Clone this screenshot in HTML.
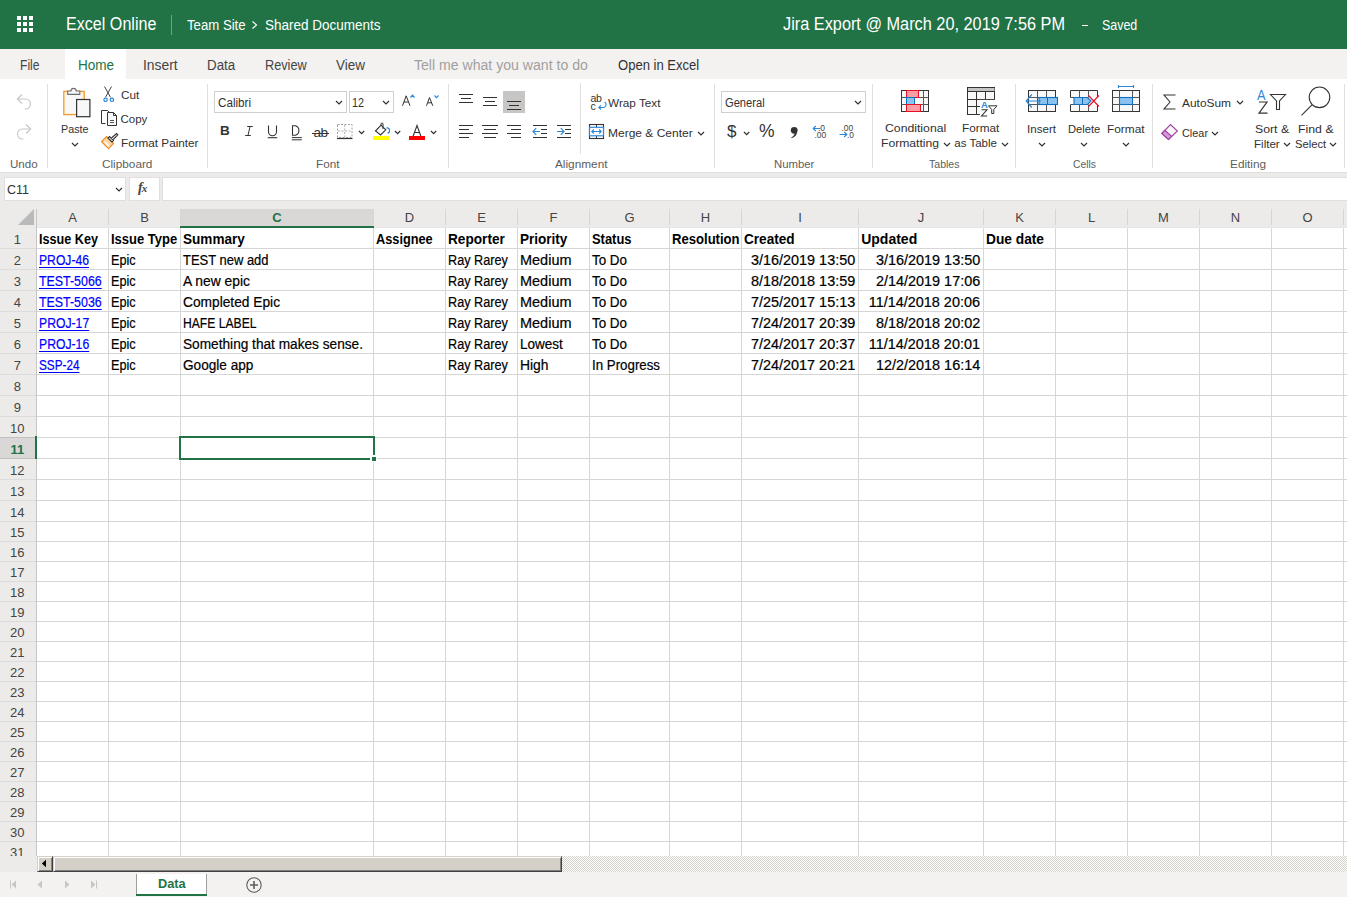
<!DOCTYPE html>
<html><head><meta charset="utf-8"><style>
html,body{margin:0;padding:0;}
body{width:1347px;height:897px;overflow:hidden;position:relative;background:#fff;font-family:"Liberation Sans",sans-serif;}
body>div,body>svg{position:absolute;}
.t{white-space:nowrap;line-height:1;}
</style></head><body>
<div style="left:0px;top:0px;width:1347px;height:49px;background:#217346;"></div>
<div style="left:17px;top:16px;width:4px;height:4px;background:#fff;"></div>
<div style="left:17px;top:22px;width:4px;height:4px;background:#fff;"></div>
<div style="left:17px;top:28px;width:4px;height:4px;background:#fff;"></div>
<div style="left:23px;top:16px;width:4px;height:4px;background:#fff;"></div>
<div style="left:23px;top:22px;width:4px;height:4px;background:#fff;"></div>
<div style="left:23px;top:28px;width:4px;height:4px;background:#fff;"></div>
<div style="left:29px;top:16px;width:4px;height:4px;background:#fff;"></div>
<div style="left:29px;top:22px;width:4px;height:4px;background:#fff;"></div>
<div style="left:29px;top:28px;width:4px;height:4px;background:#fff;"></div>
<div class="t" style="left:65.60px;top:16.00px;font-size:17.5px;color:#fff;transform:scaleX(0.9202);transform-origin:left center;">Excel Online</div>
<div style="left:171px;top:15px;width:1px;height:20px;background:rgba(255,255,255,0.35);"></div>
<div class="t" style="left:187.30px;top:18.00px;font-size:14px;color:#fff;transform:scaleX(0.9414);transform-origin:left center;">Team Site</div>
<svg style="left:251px;top:20px" width="8" height="10" viewBox="0 0 8 10"><path d="M1.5 1.5 L5.5 5 L1.5 8.5" fill="none" stroke="#fff" stroke-width="1.2"/></svg>
<div class="t" style="left:264.50px;top:18.00px;font-size:14px;color:#fff;transform:scaleX(0.9638);transform-origin:left center;">Shared Documents</div>
<div class="t" style="left:782.70px;top:16.00px;font-size:17.5px;color:#fff;transform:scaleX(0.9314);transform-origin:left center;">Jira Export @ March 20, 2019 7:56 PM</div>
<div style="left:1082px;top:25px;width:6px;height:1px;background:#fff;"></div>
<div class="t" style="left:1102.30px;top:18.00px;font-size:14px;color:#fff;transform:scaleX(0.8892);transform-origin:left center;">Saved</div>
<div style="left:0px;top:49px;width:1347px;height:30px;background:#f3f2f1;"></div>
<div style="left:65px;top:49px;width:61px;height:30px;background:#fff;"></div>
<div class="t" style="left:20.30px;top:58.00px;font-size:14px;color:#444;transform:scaleX(0.8644);transform-origin:left center;">File</div>
<div class="t" style="left:143.00px;top:58.00px;font-size:14px;color:#444;transform:scaleX(0.9910);transform-origin:left center;">Insert</div>
<div class="t" style="left:207.30px;top:58.00px;font-size:14px;color:#444;transform:scaleX(0.9536);transform-origin:left center;">Data</div>
<div class="t" style="left:265.20px;top:58.00px;font-size:14px;color:#444;transform:scaleX(0.9084);transform-origin:left center;">Review</div>
<div class="t" style="left:335.70px;top:58.00px;font-size:14px;color:#444;transform:scaleX(0.9637);transform-origin:left center;">View</div>
<div class="t" style="left:77.60px;top:58.00px;font-size:14px;color:#217346;transform:scaleX(0.9667);transform-origin:left center;">Home</div>
<div class="t" style="left:414.40px;top:58.00px;font-size:14px;color:#a19f9d;transform:scaleX(1.0060);transform-origin:left center;">Tell me what you want to do</div>
<div class="t" style="left:618.40px;top:58.00px;font-size:14px;color:#333;transform:scaleX(0.9316);transform-origin:left center;">Open in Excel</div>
<div style="left:0px;top:79px;width:1347px;height:93px;background:#fff;"></div>
<div style="left:47px;top:84px;width:1px;height:84px;background:#e1dfdd;"></div>
<div style="left:207px;top:84px;width:1px;height:84px;background:#e1dfdd;"></div>
<div style="left:448px;top:84px;width:1px;height:84px;background:#e1dfdd;"></div>
<div style="left:714px;top:84px;width:1px;height:84px;background:#e1dfdd;"></div>
<div style="left:872px;top:84px;width:1px;height:84px;background:#e1dfdd;"></div>
<div style="left:1015px;top:84px;width:1px;height:84px;background:#e1dfdd;"></div>
<div style="left:1152px;top:84px;width:1px;height:84px;background:#e1dfdd;"></div>
<div style="left:1344px;top:84px;width:1px;height:84px;background:#e1dfdd;"></div>
<div style="left:580px;top:83px;width:1px;height:71px;background:#e1dfdd;"></div>
<div class="t" style="left:9.70px;top:159.00px;font-size:11.5px;color:#605e5c;transform:scaleX(1.0076);transform-origin:left center;">Undo</div>
<div class="t" style="left:102.40px;top:159.00px;font-size:11.5px;color:#605e5c;transform:scaleX(1.0239);transform-origin:left center;">Clipboard</div>
<div class="t" style="left:316.40px;top:159.00px;font-size:11.5px;color:#605e5c;transform:scaleX(1.0212);transform-origin:left center;">Font</div>
<div class="t" style="left:555.20px;top:159.00px;font-size:11.5px;color:#605e5c;transform:scaleX(1.0266);transform-origin:left center;">Alignment</div>
<div class="t" style="left:773.70px;top:159.00px;font-size:11.5px;color:#605e5c;transform:scaleX(0.9877);transform-origin:left center;">Number</div>
<div class="t" style="left:928.50px;top:159.00px;font-size:11.5px;color:#605e5c;transform:scaleX(0.9175);transform-origin:left center;">Tables</div>
<div class="t" style="left:1072.60px;top:159.00px;font-size:11.5px;color:#605e5c;transform:scaleX(0.8959);transform-origin:left center;">Cells</div>
<div class="t" style="left:1230.40px;top:159.00px;font-size:11.5px;color:#605e5c;transform:scaleX(1.0267);transform-origin:left center;">Editing</div>
<div class="t" style="left:60.50px;top:124.00px;font-size:11.5px;color:#323130;transform:scaleX(0.9351);transform-origin:left center;">Paste</div>
<svg style="left:71px;top:141.5px" width="8" height="6" viewBox="-4 -2.5 8 6"><path d="M-3 -1.5 L0 1.5 L3 -1.5" fill="none" stroke="#323130" stroke-width="1.2"/></svg>
<div class="t" style="left:120.50px;top:90.00px;font-size:11.5px;color:#323130;transform:scaleX(1.0226);transform-origin:left center;">Cut</div>
<div class="t" style="left:120.50px;top:114.00px;font-size:11.5px;color:#323130;">Copy</div>
<div class="t" style="left:120.50px;top:138.00px;font-size:11.5px;color:#323130;transform:scaleX(1.0190);transform-origin:left center;">Format Painter</div>
<div style="left:214px;top:91px;width:133px;height:22px;background:#fff;border:1px solid #d2d0ce;box-sizing:border-box;"></div>
<div class="t" style="left:217.60px;top:97.00px;font-size:12px;color:#323130;transform:scaleX(0.9704);transform-origin:left center;">Calibri</div>
<svg style="left:335px;top:99.5px" width="8" height="6" viewBox="-4 -2.5 8 6"><path d="M-3 -1.5 L0 1.5 L3 -1.5" fill="none" stroke="#323130" stroke-width="1.2"/></svg>
<div style="left:349px;top:91px;width:45px;height:22px;background:#fff;border:1px solid #d2d0ce;box-sizing:border-box;"></div>
<div class="t" style="left:351.60px;top:97.00px;font-size:12px;color:#323130;transform:scaleX(0.8990);transform-origin:left center;">12</div>
<svg style="left:382px;top:99.5px" width="8" height="6" viewBox="-4 -2.5 8 6"><path d="M-3 -1.5 L0 1.5 L3 -1.5" fill="none" stroke="#323130" stroke-width="1.2"/></svg>
<div class="t" style="left:608.30px;top:98.00px;font-size:11.5px;color:#323130;transform:scaleX(1.0225);transform-origin:left center;">Wrap Text</div>
<div class="t" style="left:608.30px;top:128.00px;font-size:11.5px;color:#323130;transform:scaleX(1.0434);transform-origin:left center;">Merge &amp; Center</div>
<svg style="left:697px;top:130.5px" width="8" height="6" viewBox="-4 -2.5 8 6"><path d="M-3 -1.5 L0 1.5 L3 -1.5" fill="none" stroke="#323130" stroke-width="1.2"/></svg>
<div style="left:721px;top:91px;width:145px;height:22px;background:#fff;border:1px solid #d2d0ce;box-sizing:border-box;"></div>
<div class="t" style="left:724.50px;top:97.00px;font-size:12px;color:#323130;transform:scaleX(0.9276);transform-origin:left center;">General</div>
<svg style="left:854px;top:99.5px" width="8" height="6" viewBox="-4 -2.5 8 6"><path d="M-3 -1.5 L0 1.5 L3 -1.5" fill="none" stroke="#323130" stroke-width="1.2"/></svg>
<div class="t" style="left:884.50px;top:123.00px;font-size:11.5px;color:#323130;transform:scaleX(1.0636);transform-origin:left center;">Conditional</div>
<div class="t" style="left:880.60px;top:138.00px;font-size:11.5px;color:#323130;transform:scaleX(1.0553);transform-origin:left center;">Formatting</div>
<svg style="left:943px;top:142.0px" width="8" height="6" viewBox="-4 -2.5 8 6"><path d="M-3 -1.5 L0 1.5 L3 -1.5" fill="none" stroke="#323130" stroke-width="1.2"/></svg>
<div class="t" style="left:962.40px;top:123.00px;font-size:11.5px;color:#323130;transform:scaleX(1.0241);transform-origin:left center;">Format</div>
<div class="t" style="left:954.30px;top:138.00px;font-size:11.5px;color:#323130;">as Table</div>
<svg style="left:1001px;top:142.0px" width="8" height="6" viewBox="-4 -2.5 8 6"><path d="M-3 -1.5 L0 1.5 L3 -1.5" fill="none" stroke="#323130" stroke-width="1.2"/></svg>
<div class="t" style="left:1026.70px;top:124.00px;font-size:11.5px;color:#323130;transform:scaleX(1.0083);transform-origin:left center;">Insert</div>
<div class="t" style="left:1067.70px;top:124.00px;font-size:11.5px;color:#323130;transform:scaleX(0.9717);transform-origin:left center;">Delete</div>
<div class="t" style="left:1107.40px;top:124.00px;font-size:11.5px;color:#323130;transform:scaleX(1.0324);transform-origin:left center;">Format</div>
<svg style="left:1038px;top:142.0px" width="8" height="6" viewBox="-4 -2.5 8 6"><path d="M-3 -1.5 L0 1.5 L3 -1.5" fill="none" stroke="#323130" stroke-width="1.2"/></svg>
<svg style="left:1080px;top:142.0px" width="8" height="6" viewBox="-4 -2.5 8 6"><path d="M-3 -1.5 L0 1.5 L3 -1.5" fill="none" stroke="#323130" stroke-width="1.2"/></svg>
<svg style="left:1122px;top:142.0px" width="8" height="6" viewBox="-4 -2.5 8 6"><path d="M-3 -1.5 L0 1.5 L3 -1.5" fill="none" stroke="#323130" stroke-width="1.2"/></svg>
<div class="t" style="left:1181.90px;top:98.00px;font-size:11.5px;color:#323130;transform:scaleX(1.0359);transform-origin:left center;">AutoSum</div>
<svg style="left:1235.5px;top:99.5px" width="8" height="6" viewBox="-4 -2.5 8 6"><path d="M-3 -1.5 L0 1.5 L3 -1.5" fill="none" stroke="#323130" stroke-width="1.2"/></svg>
<div class="t" style="left:1181.90px;top:128.00px;font-size:11.5px;color:#323130;transform:scaleX(0.9461);transform-origin:left center;">Clear</div>
<svg style="left:1210.6px;top:130.5px" width="8" height="6" viewBox="-4 -2.5 8 6"><path d="M-3 -1.5 L0 1.5 L3 -1.5" fill="none" stroke="#323130" stroke-width="1.2"/></svg>
<div class="t" style="left:1255.10px;top:124.00px;font-size:11.5px;color:#323130;transform:scaleX(1.0671);transform-origin:left center;">Sort &amp;</div>
<div class="t" style="left:1254.20px;top:139.00px;font-size:11.5px;color:#323130;transform:scaleX(1.0057);transform-origin:left center;">Filter</div>
<svg style="left:1283.3px;top:142.0px" width="8" height="6" viewBox="-4 -2.5 8 6"><path d="M-3 -1.5 L0 1.5 L3 -1.5" fill="none" stroke="#323130" stroke-width="1.2"/></svg>
<div class="t" style="left:1298.20px;top:124.00px;font-size:11.5px;color:#323130;transform:scaleX(1.0711);transform-origin:left center;">Find &amp;</div>
<div class="t" style="left:1294.70px;top:139.00px;font-size:11.5px;color:#323130;transform:scaleX(0.9762);transform-origin:left center;">Select</div>
<svg style="left:1329.3px;top:142.0px" width="8" height="6" viewBox="-4 -2.5 8 6"><path d="M-3 -1.5 L0 1.5 L3 -1.5" fill="none" stroke="#323130" stroke-width="1.2"/></svg>
<svg style="left:14px;top:92px" width="20" height="20" viewBox="0 0 20 20"><path d="M3.5 7 H11.5 A5 5 0 0 1 11.5 17 H10.5" fill="none" stroke="#c8c6c4" stroke-width="1.1"/><path d="M8 2.5 L3.3 7 L8 11.5" fill="none" stroke="#c8c6c4" stroke-width="1.1"/></svg>
<svg style="left:14px;top:122px" width="20" height="20" viewBox="0 0 20 20"><path d="M16.5 7 H8.5 A5 5 0 0 0 8.5 17 H9.5" fill="none" stroke="#c8c6c4" stroke-width="1.1"/><path d="M12 2.5 L16.7 7 L12 11.5" fill="none" stroke="#c8c6c4" stroke-width="1.1"/></svg>
<svg style="left:62px;top:85px" width="30" height="33" viewBox="0 0 30 33"><rect x="1.8" y="6.3" width="20.4" height="23.4" fill="#fdf2d0" stroke="#ed8b22" stroke-width="1.1"/><rect x="3.5" y="9" width="16.5" height="19" fill="#f8f8f8"/><path d="M5.7 9.4 V6 H9 A2.6 2.6 0 0 1 14.2 6 H17.8 V9.4 Z" fill="#f8f8f8" stroke="#6e6e6e" stroke-width="1.1"/><rect x="14.6" y="14.5" width="13.3" height="17.2" fill="#f8f8f8" stroke="#333" stroke-width="1.2"/></svg>
<svg style="left:102px;top:85px" width="14" height="18" viewBox="0 0 14 18"><path d="M2.5 1.5 L8.5 12.3 M9.5 1.5 L3.5 12.3" stroke="#444" stroke-width="1" fill="none"/><circle cx="3.6" cy="14.8" r="1.7" fill="none" stroke="#2b88d8" stroke-width="1.2"/><circle cx="9.9" cy="14.8" r="1.7" fill="none" stroke="#2b88d8" stroke-width="1.2"/></svg>
<svg style="left:100px;top:109px" width="19" height="18" viewBox="0 0 19 18"><path d="M7.5 1.5 H1.5 V14.5 H5.5" fill="none" stroke="#333" stroke-width="1"/><path d="M7.5 1.5 L9 3" fill="none" stroke="#333" stroke-width="1"/><path d="M7.5 3.5 H13.5 L16.5 6.5 V16.5 H7.5 Z" fill="#f8f8f8" stroke="#333" stroke-width="1"/><path d="M13.5 3.5 V6.5 H16.5" fill="none" stroke="#333" stroke-width="1"/><path d="M10 11.5 H14 M10 13.5 H14" stroke="#555" stroke-width="1"/></svg>
<svg style="left:100px;top:132px" width="19" height="18" viewBox="0 0 19 18"><path d="M1.5 9.5 L8.5 16.8 L13.5 11.5 L6.5 4.5 Z" fill="#fcd59f" stroke="#ed8b22" stroke-width="1.1"/><path d="M4.5 9.5 L9 14" stroke="#fff" stroke-width="1.5"/><path d="M8 6 L12 10 L13.5 8.5 L9.5 4.5 Z" fill="#fff" stroke="#333" stroke-width="1.1"/><path d="M11.5 6 L16.5 1.5 L17.8 2.8 L13.3 7.5" fill="#fff" stroke="#333" stroke-width="1.1"/></svg>
<svg style="left:401px;top:93px" width="16" height="15" viewBox="0 0 16 15"><path d="M1.5 12.8 L5.2 2.8 L9 12.8 M3 9 H7.5" fill="none" stroke="#323130" stroke-width="1"/><path d="M9.5 4.5 L11.5 2.2 L13.5 4.5" fill="none" stroke="#2b88d8" stroke-width="1.2"/></svg>
<svg style="left:425px;top:93px" width="16" height="15" viewBox="0 0 16 15"><path d="M1.5 12.8 L4.5 4.5 L7.8 12.8 M2.8 9.8 H6.5" fill="none" stroke="#323130" stroke-width="1"/><path d="M9.5 2.5 L11.5 4.6 L13.5 2.5" fill="none" stroke="#2b88d8" stroke-width="1.2"/></svg>
<div class="t" style="left:220px;top:124px;font-size:13.5px;font-weight:bold;color:#333;line-height:14px;">B</div>
<svg style="left:244px;top:125px" width="10" height="12" viewBox="0 0 10 12"><path d="M3.2 1.5 H8.8 M1.2 10.5 H6.8 M6 1.5 L4 10.5" fill="none" stroke="#333" stroke-width="1"/></svg>
<svg style="left:266px;top:124px" width="13" height="17" viewBox="0 0 13 17"><path d="M2.5 1.5 V7.8 A4 4 0 0 0 10.5 7.8 V1.5" fill="none" stroke="#333" stroke-width="1.1"/><path d="M1.8 13.7 H11.2" stroke="#333" stroke-width="1.1"/></svg>
<svg style="left:290px;top:124px" width="14" height="17" viewBox="0 0 14 17"><path d="M2.5 1.8 H5.5 A5 5 0 0 1 5.5 11.3 H2.5 Z" fill="none" stroke="#333" stroke-width="1.1"/><path d="M1.8 13.6 H11.8 M1.8 15.8 H11.8" stroke="#333" stroke-width="1"/></svg>
<div class="t" style="left:313.5px;top:125.5px;font-size:13.5px;color:#333;line-height:14px;letter-spacing:-0.5px;">ab</div>
<div style="left:312px;top:133px;width:17px;height:1px;background:#333;"></div>
<svg style="left:336px;top:123px" width="18" height="17" viewBox="0 0 18 17"><rect x="1.5" y="1.5" width="14.5" height="13" fill="none" stroke="#a0a0a0" stroke-width="1" stroke-dasharray="2 1.5"/><path d="M8.7 2 V14 M2 8 H15.5" stroke="#b0b0b0" stroke-width="1" stroke-dasharray="2 1.5"/><path d="M1 15.5 H16.5" stroke="#333" stroke-width="1.2"/></svg>
<svg style="left:357.9px;top:130.2px" width="7.2" height="5.6" viewBox="-3.6 -2.3 7.2 5.6"><path d="M-2.6 -1.3 L0 1.3 L2.6 -1.3" fill="none" stroke="#323130" stroke-width="1.2"/></svg>
<svg style="left:372px;top:122px" width="18" height="14" viewBox="0 0 18 14"><path d="M3.5 9 L9 3.2 L13.8 7.8 L8.6 13 Z" fill="#f8f8f8" stroke="#333" stroke-width="1.1"/><path d="M9 3.2 V2 A1 1 0 0 1 11 2 V7" fill="none" stroke="#333" stroke-width="1"/><path d="M14.5 6 A1.8 1.8 0 0 1 15.6 11" fill="none" stroke="#2b88d8" stroke-width="1.3"/></svg>
<div style="left:373px;top:136px;width:16px;height:4px;background:#ffff00;"></div>
<svg style="left:393.9px;top:130.2px" width="7.2" height="5.6" viewBox="-3.6 -2.3 7.2 5.6"><path d="M-2.6 -1.3 L0 1.3 L2.6 -1.3" fill="none" stroke="#323130" stroke-width="1.2"/></svg>
<svg style="left:409px;top:124px" width="16" height="13" viewBox="0 0 16 13"><path d="M4 12.5 L8 1.5 L12 12.5 M5.5 8.5 H10.5" fill="none" stroke="#333" stroke-width="1.1"/></svg>
<div style="left:409px;top:136px;width:16px;height:4px;background:#ff0000;"></div>
<svg style="left:429.9px;top:130.2px" width="7.2" height="5.6" viewBox="-3.6 -2.3 7.2 5.6"><path d="M-2.6 -1.3 L0 1.3 L2.6 -1.3" fill="none" stroke="#323130" stroke-width="1.2"/></svg>
<div style="left:503px;top:91px;width:22px;height:22px;background:#c8c6c4;"></div>
<div style="left:459px;top:94px;width:14px;height:1px;background:#333;"></div>
<div style="left:461px;top:98px;width:10px;height:1px;background:#333;"></div>
<div style="left:459px;top:102px;width:14px;height:1px;background:#333;"></div>
<div style="left:483px;top:97px;width:14px;height:1px;background:#333;"></div>
<div style="left:485px;top:101px;width:10px;height:1px;background:#333;"></div>
<div style="left:483px;top:105px;width:14px;height:1px;background:#333;"></div>
<div style="left:507px;top:101px;width:14px;height:1px;background:#333;"></div>
<div style="left:509px;top:105px;width:10px;height:1px;background:#333;"></div>
<div style="left:507px;top:109px;width:14px;height:1px;background:#333;"></div>
<div style="left:459px;top:125px;width:14px;height:1px;background:#333;"></div>
<div style="left:459px;top:129px;width:10px;height:1px;background:#333;"></div>
<div style="left:459px;top:133px;width:14px;height:1px;background:#333;"></div>
<div style="left:459px;top:137px;width:10px;height:1px;background:#333;"></div>
<div style="left:482px;top:125px;width:16px;height:1px;background:#333;"></div>
<div style="left:484px;top:129px;width:12px;height:1px;background:#333;"></div>
<div style="left:482px;top:133px;width:16px;height:1px;background:#333;"></div>
<div style="left:484px;top:137px;width:12px;height:1px;background:#333;"></div>
<div style="left:507px;top:125px;width:14px;height:1px;background:#333;"></div>
<div style="left:511px;top:129px;width:10px;height:1px;background:#333;"></div>
<div style="left:507px;top:133px;width:14px;height:1px;background:#333;"></div>
<div style="left:511px;top:137px;width:10px;height:1px;background:#333;"></div>
<div style="left:533px;top:125px;width:14px;height:1px;background:#333;"></div>
<div style="left:541px;top:129px;width:6px;height:1px;background:#333;"></div>
<div style="left:541px;top:133px;width:6px;height:1px;background:#333;"></div>
<div style="left:533px;top:137px;width:14px;height:1px;background:#333;"></div>
<div style="left:557px;top:125px;width:14px;height:1px;background:#333;"></div>
<div style="left:565px;top:129px;width:6px;height:1px;background:#333;"></div>
<div style="left:565px;top:133px;width:6px;height:1px;background:#333;"></div>
<div style="left:557px;top:137px;width:14px;height:1px;background:#333;"></div>
<svg style="left:532px;top:127px" width="9" height="9" viewBox="0 0 9 9"><path d="M8 4.5 H1 M4.2 1.2 L1 4.5 L4.2 7.8" fill="none" stroke="#2b88d8" stroke-width="1.2"/></svg>
<svg style="left:556px;top:127px" width="9" height="9" viewBox="0 0 9 9"><path d="M1 4.5 H8 M4.8 1.2 L8 4.5 L4.8 7.8" fill="none" stroke="#2b88d8" stroke-width="1.2"/></svg>
<div class="t" style="left:590.5px;top:93px;font-size:10.5px;color:#333;line-height:10px;letter-spacing:-0.3px;">ab</div>
<div class="t" style="left:590.5px;top:101px;font-size:10.5px;color:#333;line-height:10px;">c</div>
<svg style="left:597px;top:100px" width="10" height="11" viewBox="0 0 10 11"><path d="M7.6 2 A3 3 0 0 1 5.5 7.5 H2 M4 5.3 L1.8 7.5 L4 9.7" fill="none" stroke="#2b88d8" stroke-width="1.1"/></svg>
<svg style="left:588px;top:123px" width="17" height="17" viewBox="0 0 17 17"><rect x="1.5" y="1.5" width="14" height="14" fill="#fff" stroke="#333" stroke-width="1.1"/><path d="M8.5 1.5 V4 M8.5 13 V15.5" stroke="#333" stroke-width="1"/><rect x="1.5" y="4.3" width="14" height="8.5" fill="#fff" stroke="#2b88d8" stroke-width="1.2"/><path d="M3.8 8.5 H13.2 M5.8 6.5 L3.8 8.5 L5.8 10.5 M11.2 6.5 L13.2 8.5 L11.2 10.5" fill="none" stroke="#2b88d8" stroke-width="1.1"/></svg>
<div class="t" style="left:727px;top:123px;font-size:17px;color:#333;line-height:17px;">$</div>
<svg style="left:742.9px;top:130.7px" width="7.2" height="5.6" viewBox="-3.6 -2.3 7.2 5.6"><path d="M-2.6 -1.3 L0 1.3 L2.6 -1.3" fill="none" stroke="#323130" stroke-width="1.2"/></svg>
<div class="t" style="left:759px;top:123px;font-size:17.5px;color:#333;line-height:17px;">%</div>
<svg style="left:789px;top:126px" width="10" height="13" viewBox="0 0 10 13"><circle cx="5.2" cy="4.3" r="3.4" fill="#333"/><path d="M7.9 5.5 C8.3 8.5 6.5 11 2.6 12.3 L2.2 11.4 C4.6 10.2 5.9 8.5 5.6 6.5 Z" fill="#333"/></svg>
<div class="t" style="left:818px;top:124px;font-size:8.5px;color:#444;line-height:8px;">.0</div>
<div class="t" style="left:814.5px;top:131px;font-size:8.5px;color:#444;line-height:8px;">.00</div>
<svg style="left:812px;top:125px" width="9" height="7" viewBox="0 0 9 7"><path d="M8.5 3.5 H1.2 M3.8 1 L1.2 3.5 L3.8 6" fill="none" stroke="#2b88d8" stroke-width="1.1"/></svg>
<div class="t" style="left:841.5px;top:124px;font-size:8.5px;color:#444;line-height:8px;">.00</div>
<div class="t" style="left:847px;top:131px;font-size:8.5px;color:#444;line-height:8px;">.0</div>
<svg style="left:839px;top:131px" width="9" height="7" viewBox="0 0 9 7"><path d="M0.5 3.5 H7.8 M5.2 1 L7.8 3.5 L5.2 6" fill="none" stroke="#2b88d8" stroke-width="1.1"/></svg>
<svg style="left:900px;top:89px" width="31" height="24" viewBox="0 0 31 24"><rect x="1.5" y="1.5" width="27" height="21" fill="#f8f8f8" stroke="#333" stroke-width="1"/><path d="M1.5 8.5 H28.5 M1.5 15.5 H28.5 M6.5 1.5 V22.5 M23.5 1.5 V22.5" stroke="#555" stroke-width="1"/><rect x="6.5" y="1.5" width="12" height="7" fill="#ff9ca5" stroke="#e81123" stroke-width="1"/><rect x="6.5" y="8.5" width="8" height="7" fill="#8cc2f0" stroke="#106ebe" stroke-width="1"/><rect x="6.5" y="15.5" width="14" height="7" fill="#ff9ca5" stroke="#e81123" stroke-width="1"/></svg>
<svg style="left:966px;top:86px" width="33" height="33" viewBox="0 0 33 33"><rect x="1.5" y="1.5" width="27" height="27" fill="#f8f8f8" stroke="#333" stroke-width="1"/><rect x="2" y="2" width="26.5" height="3.5" fill="#c8c6c4"/><path d="M1.5 5.5 H28.5 M1.5 13.5 H28.5 M1.5 20.5 H14 M10.5 5.5 V28.5 M19.5 5.5 V13.5" stroke="#333" stroke-width="1"/><rect x="14" y="13.9" width="19" height="19" fill="#fff"/><text x="15" y="21.5" font-family="Liberation Sans" font-weight="bold" font-size="9.5" fill="#2b88d8">A</text><path d="M15.5 23.8 H21 L15.5 30 H21.2" fill="none" stroke="#333" stroke-width="1.1"/><path d="M22.5 19.8 H31 L27.8 23.5 V27.5 H25.7 V23.5 Z" fill="#fff" stroke="#333" stroke-width="1"/></svg>
<svg style="left:1025px;top:89px" width="35" height="24" viewBox="0 0 35 24"><rect x="3.5" y="1.5" width="27" height="21" fill="#f8f8f8" stroke="#333" stroke-width="1"/><path d="M12.5 1.5 V22.5 M21.5 1.5 V22.5 M3.5 8.5 H30.5 M3.5 15.5 H30.5" stroke="#555" stroke-width="1"/><rect x="14" y="8.5" width="18.5" height="7" fill="#8cc2f0" stroke="#106ebe" stroke-width="1.1"/><path d="M22.5 8.8 V15.2" stroke="#106ebe" stroke-width="1"/><path d="M16 12 H2 M6.8 5.5 L1.2 12 L6.8 18.5" fill="none" stroke="#2b88d8" stroke-width="1.2"/></svg>
<svg style="left:1069px;top:89px" width="32" height="24" viewBox="0 0 32 24"><path d="M1.5 8.5 V1.5 H28.5 V8" fill="#f8f8f8" stroke="#333" stroke-width="1"/><path d="M1.5 15.5 V22.5 H28.5 V16" fill="#f8f8f8" stroke="#333" stroke-width="1"/><path d="M10.5 1.5 V8.5 M19.5 1.5 V8.5 M10.5 15.5 V22.5 M19.5 15.5 V22.5 M1.5 8.5 H5 M1.5 15.5 H5" stroke="#555" stroke-width="1"/><path d="M5 8.5 H18.5 L22 12 L18.5 15.5 H5 Z" fill="#8cc2f0" stroke="#106ebe" stroke-width="1.1"/><path d="M13.5 8.8 V15.2" stroke="#106ebe" stroke-width="1"/><path d="M19.5 6.5 L30 17.5 M30 6.5 L19.5 17.5" stroke="#e81123" stroke-width="1.1"/></svg>
<svg style="left:1111px;top:84px" width="31" height="29" viewBox="0 0 31 29"><rect x="1.5" y="6.5" width="27" height="21" fill="#f8f8f8" stroke="#333" stroke-width="1"/><path d="M8.5 6.5 V27.5 M21.5 6.5 V27.5 M1.5 13.5 H28.5 M1.5 20.5 H28.5" stroke="#555" stroke-width="1"/><rect x="8.5" y="13.5" width="13" height="7" fill="#8cc2f0" stroke="#106ebe" stroke-width="1.1"/><path d="M7.5 2.5 H22.5 M7.5 1 V4 M22.5 1 V4" stroke="#2b88d8" stroke-width="1.1"/></svg>
<svg style="left:1162px;top:93px" width="16" height="18" viewBox="0 0 16 18"><path d="M13.5 2 H2 L8 9 L2 16 H13.5" fill="none" stroke="#333" stroke-width="1.1"/></svg>
<svg style="left:1160px;top:123px" width="19" height="18" viewBox="0 0 19 18"><path d="M1.8 10.5 L10.5 1.5 L17.4 8 L8.5 16.4 Z" fill="#f8f8f8" stroke="#a33ea5" stroke-width="1.1"/><path d="M1.8 10.5 L4.85 7.35 L11.6 13.3 L8.5 16.4 Z" fill="#d29ad4" stroke="#a33ea5" stroke-width="1.1"/></svg>
<svg style="left:1256px;top:86px" width="32" height="30" viewBox="0 0 32 30"><text x="1.2" y="13.5" font-family="Liberation Sans" font-size="15" fill="#2b88d8" transform="scale(0.85,1)">A</text><path d="M3 16 H11 L3 27.2 H11.5" fill="none" stroke="#333" stroke-width="1.2"/><path d="M14.5 8.5 H29.5 L23.5 15 V23.5 H20.5 V15 Z" fill="#fff" stroke="#333" stroke-width="1.1"/></svg>
<svg style="left:1299px;top:85px" width="34" height="33" viewBox="0 0 34 33"><circle cx="20.5" cy="12.3" r="10.3" fill="#fff" stroke="#333" stroke-width="1.1"/><path d="M13.2 19.6 L2.5 30.3" stroke="#333" stroke-width="1.1"/></svg>
<div style="left:0px;top:172px;width:1347px;height:37px;background:#edebe9;"></div>
<div style="left:0px;top:172px;width:1347px;height:1px;background:#e1dfdd;"></div>
<div style="left:4px;top:177px;width:122px;height:24px;background:#fff;border:1px solid #e1dfdd;box-sizing:border-box;"></div>
<div class="t" style="left:7.30px;top:183.00px;font-size:13px;color:#323130;transform:scaleX(0.9614);transform-origin:left center;">C11</div>
<svg style="left:115px;top:186.5px" width="8" height="6" viewBox="-4 -2.5 8 6"><path d="M-3 -1.5 L0 1.5 L3 -1.5" fill="none" stroke="#323130" stroke-width="1.2"/></svg>
<div style="left:129px;top:177px;width:31px;height:24px;background:#fff;border:1px solid #e1dfdd;box-sizing:border-box;"></div>
<div class="t" style="left:138px;top:181px;font-size:14px;font-style:italic;font-weight:bold;color:#444;line-height:14px;font-family:'Liberation Serif',serif;letter-spacing:-1px;">f<span style="font-size:11px">x</span></div>
<div style="left:162px;top:177px;width:1186px;height:24px;background:#fff;border:1px solid #e1dfdd;box-sizing:border-box;"></div>
<div style="left:0px;top:209px;width:1347px;height:18px;background:#edebe9;"></div>
<div style="left:0px;top:227px;width:36px;height:629px;background:#edebe9;"></div>
<div style="left:37px;top:228px;width:1310px;height:628px;background:#fff;"></div>
<div style="left:37px;top:248px;width:1310px;height:1px;background:#d6d6d6;"></div>
<div style="left:0px;top:248px;width:36px;height:1px;background:#dcdcdc;"></div>
<div style="left:37px;top:269px;width:1310px;height:1px;background:#d6d6d6;"></div>
<div style="left:0px;top:269px;width:36px;height:1px;background:#dcdcdc;"></div>
<div style="left:37px;top:290px;width:1310px;height:1px;background:#d6d6d6;"></div>
<div style="left:0px;top:290px;width:36px;height:1px;background:#dcdcdc;"></div>
<div style="left:37px;top:311px;width:1310px;height:1px;background:#d6d6d6;"></div>
<div style="left:0px;top:311px;width:36px;height:1px;background:#dcdcdc;"></div>
<div style="left:37px;top:332px;width:1310px;height:1px;background:#d6d6d6;"></div>
<div style="left:0px;top:332px;width:36px;height:1px;background:#dcdcdc;"></div>
<div style="left:37px;top:353px;width:1310px;height:1px;background:#d6d6d6;"></div>
<div style="left:0px;top:353px;width:36px;height:1px;background:#dcdcdc;"></div>
<div style="left:37px;top:374px;width:1310px;height:1px;background:#d6d6d6;"></div>
<div style="left:0px;top:374px;width:36px;height:1px;background:#dcdcdc;"></div>
<div style="left:37px;top:395px;width:1310px;height:1px;background:#d6d6d6;"></div>
<div style="left:0px;top:395px;width:36px;height:1px;background:#dcdcdc;"></div>
<div style="left:37px;top:416px;width:1310px;height:1px;background:#d6d6d6;"></div>
<div style="left:0px;top:416px;width:36px;height:1px;background:#dcdcdc;"></div>
<div style="left:37px;top:437px;width:1310px;height:1px;background:#d6d6d6;"></div>
<div style="left:0px;top:437px;width:36px;height:1px;background:#dcdcdc;"></div>
<div style="left:37px;top:458px;width:1310px;height:1px;background:#d6d6d6;"></div>
<div style="left:0px;top:458px;width:36px;height:1px;background:#dcdcdc;"></div>
<div style="left:37px;top:479px;width:1310px;height:1px;background:#d6d6d6;"></div>
<div style="left:0px;top:479px;width:36px;height:1px;background:#dcdcdc;"></div>
<div style="left:37px;top:500px;width:1310px;height:1px;background:#d6d6d6;"></div>
<div style="left:0px;top:500px;width:36px;height:1px;background:#dcdcdc;"></div>
<div style="left:37px;top:521px;width:1310px;height:1px;background:#d6d6d6;"></div>
<div style="left:0px;top:521px;width:36px;height:1px;background:#dcdcdc;"></div>
<div style="left:37px;top:541px;width:1310px;height:1px;background:#d6d6d6;"></div>
<div style="left:0px;top:541px;width:36px;height:1px;background:#dcdcdc;"></div>
<div style="left:37px;top:561px;width:1310px;height:1px;background:#d6d6d6;"></div>
<div style="left:0px;top:561px;width:36px;height:1px;background:#dcdcdc;"></div>
<div style="left:37px;top:581px;width:1310px;height:1px;background:#d6d6d6;"></div>
<div style="left:0px;top:581px;width:36px;height:1px;background:#dcdcdc;"></div>
<div style="left:37px;top:601px;width:1310px;height:1px;background:#d6d6d6;"></div>
<div style="left:0px;top:601px;width:36px;height:1px;background:#dcdcdc;"></div>
<div style="left:37px;top:621px;width:1310px;height:1px;background:#d6d6d6;"></div>
<div style="left:0px;top:621px;width:36px;height:1px;background:#dcdcdc;"></div>
<div style="left:37px;top:641px;width:1310px;height:1px;background:#d6d6d6;"></div>
<div style="left:0px;top:641px;width:36px;height:1px;background:#dcdcdc;"></div>
<div style="left:37px;top:661px;width:1310px;height:1px;background:#d6d6d6;"></div>
<div style="left:0px;top:661px;width:36px;height:1px;background:#dcdcdc;"></div>
<div style="left:37px;top:681px;width:1310px;height:1px;background:#d6d6d6;"></div>
<div style="left:0px;top:681px;width:36px;height:1px;background:#dcdcdc;"></div>
<div style="left:37px;top:701px;width:1310px;height:1px;background:#d6d6d6;"></div>
<div style="left:0px;top:701px;width:36px;height:1px;background:#dcdcdc;"></div>
<div style="left:37px;top:721px;width:1310px;height:1px;background:#d6d6d6;"></div>
<div style="left:0px;top:721px;width:36px;height:1px;background:#dcdcdc;"></div>
<div style="left:37px;top:741px;width:1310px;height:1px;background:#d6d6d6;"></div>
<div style="left:0px;top:741px;width:36px;height:1px;background:#dcdcdc;"></div>
<div style="left:37px;top:761px;width:1310px;height:1px;background:#d6d6d6;"></div>
<div style="left:0px;top:761px;width:36px;height:1px;background:#dcdcdc;"></div>
<div style="left:37px;top:781px;width:1310px;height:1px;background:#d6d6d6;"></div>
<div style="left:0px;top:781px;width:36px;height:1px;background:#dcdcdc;"></div>
<div style="left:37px;top:801px;width:1310px;height:1px;background:#d6d6d6;"></div>
<div style="left:0px;top:801px;width:36px;height:1px;background:#dcdcdc;"></div>
<div style="left:37px;top:821px;width:1310px;height:1px;background:#d6d6d6;"></div>
<div style="left:0px;top:821px;width:36px;height:1px;background:#dcdcdc;"></div>
<div style="left:37px;top:841px;width:1310px;height:1px;background:#d6d6d6;"></div>
<div style="left:0px;top:841px;width:36px;height:1px;background:#dcdcdc;"></div>
<div style="left:37px;top:861px;width:1310px;height:1px;background:#d6d6d6;"></div>
<div style="left:0px;top:861px;width:36px;height:1px;background:#dcdcdc;"></div>
<div style="left:108px;top:228px;width:1px;height:628px;background:#d6d6d6;"></div>
<div style="left:108px;top:209px;width:1px;height:16px;background:#d8d6d4;"></div>
<div style="left:180px;top:228px;width:1px;height:628px;background:#d6d6d6;"></div>
<div style="left:180px;top:209px;width:1px;height:16px;background:#d8d6d4;"></div>
<div style="left:373px;top:228px;width:1px;height:628px;background:#d6d6d6;"></div>
<div style="left:373px;top:209px;width:1px;height:16px;background:#d8d6d4;"></div>
<div style="left:445px;top:228px;width:1px;height:628px;background:#d6d6d6;"></div>
<div style="left:445px;top:209px;width:1px;height:16px;background:#d8d6d4;"></div>
<div style="left:517px;top:228px;width:1px;height:628px;background:#d6d6d6;"></div>
<div style="left:517px;top:209px;width:1px;height:16px;background:#d8d6d4;"></div>
<div style="left:589px;top:228px;width:1px;height:628px;background:#d6d6d6;"></div>
<div style="left:589px;top:209px;width:1px;height:16px;background:#d8d6d4;"></div>
<div style="left:669px;top:228px;width:1px;height:628px;background:#d6d6d6;"></div>
<div style="left:669px;top:209px;width:1px;height:16px;background:#d8d6d4;"></div>
<div style="left:741px;top:228px;width:1px;height:628px;background:#d6d6d6;"></div>
<div style="left:741px;top:209px;width:1px;height:16px;background:#d8d6d4;"></div>
<div style="left:858px;top:228px;width:1px;height:628px;background:#d6d6d6;"></div>
<div style="left:858px;top:209px;width:1px;height:16px;background:#d8d6d4;"></div>
<div style="left:983px;top:228px;width:1px;height:628px;background:#d6d6d6;"></div>
<div style="left:983px;top:209px;width:1px;height:16px;background:#d8d6d4;"></div>
<div style="left:1055px;top:228px;width:1px;height:628px;background:#d6d6d6;"></div>
<div style="left:1055px;top:209px;width:1px;height:16px;background:#d8d6d4;"></div>
<div style="left:1127px;top:228px;width:1px;height:628px;background:#d6d6d6;"></div>
<div style="left:1127px;top:209px;width:1px;height:16px;background:#d8d6d4;"></div>
<div style="left:1199px;top:228px;width:1px;height:628px;background:#d6d6d6;"></div>
<div style="left:1199px;top:209px;width:1px;height:16px;background:#d8d6d4;"></div>
<div style="left:1271px;top:228px;width:1px;height:628px;background:#d6d6d6;"></div>
<div style="left:1271px;top:209px;width:1px;height:16px;background:#d8d6d4;"></div>
<div style="left:1343px;top:228px;width:1px;height:628px;background:#d6d6d6;"></div>
<div style="left:1343px;top:209px;width:1px;height:16px;background:#d8d6d4;"></div>
<div style="left:36px;top:209px;width:1px;height:647px;background:#c6c6c6;"></div>
<div style="left:37px;top:227px;width:1310px;height:1px;background:#e8e6e4;"></div>
<svg style="left:18px;top:209px" width="17" height="16" viewBox="0 0 17 16"><path d="M16 0 L16 16 L0 16 Z" fill="#b9b9b9"/></svg>
<div style="left:181px;top:209px;width:192px;height:17px;background:#dad8d6;"></div>
<div style="left:180px;top:226px;width:194px;height:2px;background:#217346;"></div>
<div class="t" style="left:68.16px;top:211.00px;font-size:13px;color:#444;">A</div>
<div class="t" style="left:140.16px;top:211.00px;font-size:13px;color:#444;">B</div>
<div class="t" style="left:272.31px;top:211.00px;font-size:13px;color:#217346;font-weight:bold;">C</div>
<div class="t" style="left:404.81px;top:211.00px;font-size:13px;color:#444;">D</div>
<div class="t" style="left:477.16px;top:211.00px;font-size:13px;color:#444;">E</div>
<div class="t" style="left:549.53px;top:211.00px;font-size:13px;color:#444;">F</div>
<div class="t" style="left:624.44px;top:211.00px;font-size:13px;color:#444;">G</div>
<div class="t" style="left:700.81px;top:211.00px;font-size:13px;color:#444;">H</div>
<div class="t" style="left:798.19px;top:211.00px;font-size:13px;color:#444;">I</div>
<div class="t" style="left:917.75px;top:211.00px;font-size:13px;color:#444;">J</div>
<div class="t" style="left:1015.16px;top:211.00px;font-size:13px;color:#444;">K</div>
<div class="t" style="left:1087.88px;top:211.00px;font-size:13px;color:#444;">L</div>
<div class="t" style="left:1158.09px;top:211.00px;font-size:13px;color:#444;">M</div>
<div class="t" style="left:1230.81px;top:211.00px;font-size:13px;color:#444;">N</div>
<div class="t" style="left:1302.44px;top:211.00px;font-size:13px;color:#444;">O</div>
<div class="t" style="left:13.68px;top:233.00px;font-size:13px;color:#444;">1</div>
<div class="t" style="left:13.68px;top:254.00px;font-size:13px;color:#444;">2</div>
<div class="t" style="left:13.68px;top:275.00px;font-size:13px;color:#444;">3</div>
<div class="t" style="left:13.68px;top:296.00px;font-size:13px;color:#444;">4</div>
<div class="t" style="left:13.68px;top:317.00px;font-size:13px;color:#444;">5</div>
<div class="t" style="left:13.68px;top:338.00px;font-size:13px;color:#444;">6</div>
<div class="t" style="left:13.68px;top:359.00px;font-size:13px;color:#444;">7</div>
<div class="t" style="left:13.68px;top:380.00px;font-size:13px;color:#444;">8</div>
<div class="t" style="left:13.68px;top:401.00px;font-size:13px;color:#444;">9</div>
<div class="t" style="left:10.07px;top:422.00px;font-size:13px;color:#444;">10</div>
<div style="left:0px;top:437px;width:36px;height:22px;background:#dad8d6;"></div>
<div style="left:0px;top:437px;width:36px;height:1px;background:#c0c0c0;"></div>
<div style="left:0px;top:458px;width:36px;height:1px;background:#c0c0c0;"></div>
<div style="left:35px;top:436px;width:2px;height:23px;background:#217346;"></div>
<div class="t" style="left:10.43px;top:443.00px;font-size:13px;color:#217346;font-weight:bold;">11</div>
<div class="t" style="left:10.07px;top:464.00px;font-size:13px;color:#444;">12</div>
<div class="t" style="left:10.07px;top:485.00px;font-size:13px;color:#444;">13</div>
<div class="t" style="left:10.07px;top:506.00px;font-size:13px;color:#444;">14</div>
<div class="t" style="left:10.07px;top:526.00px;font-size:13px;color:#444;">15</div>
<div class="t" style="left:10.07px;top:546.00px;font-size:13px;color:#444;">16</div>
<div class="t" style="left:10.07px;top:566.00px;font-size:13px;color:#444;">17</div>
<div class="t" style="left:10.07px;top:586.00px;font-size:13px;color:#444;">18</div>
<div class="t" style="left:10.07px;top:606.00px;font-size:13px;color:#444;">19</div>
<div class="t" style="left:10.07px;top:626.00px;font-size:13px;color:#444;">20</div>
<div class="t" style="left:10.07px;top:646.00px;font-size:13px;color:#444;">21</div>
<div class="t" style="left:10.07px;top:666.00px;font-size:13px;color:#444;">22</div>
<div class="t" style="left:10.07px;top:686.00px;font-size:13px;color:#444;">23</div>
<div class="t" style="left:10.07px;top:706.00px;font-size:13px;color:#444;">24</div>
<div class="t" style="left:10.07px;top:726.00px;font-size:13px;color:#444;">25</div>
<div class="t" style="left:10.07px;top:746.00px;font-size:13px;color:#444;">26</div>
<div class="t" style="left:10.07px;top:766.00px;font-size:13px;color:#444;">27</div>
<div class="t" style="left:10.07px;top:786.00px;font-size:13px;color:#444;">28</div>
<div class="t" style="left:10.07px;top:806.00px;font-size:13px;color:#444;">29</div>
<div class="t" style="left:10.07px;top:826.00px;font-size:13px;color:#444;">30</div>
<div class="t" style="left:10.07px;top:846.00px;font-size:13px;color:#444;">31</div>
<div style="left:179px;top:436px;width:196px;height:24px;background:transparent;border:2px solid #217346;box-sizing:border-box;"></div>
<div style="left:370px;top:455px;width:7px;height:7px;background:#fff;"></div>
<div style="left:372px;top:457px;width:4px;height:4px;background:#217346;"></div>
<div class="t" style="left:39.20px;top:232.00px;font-size:14px;color:#000;font-weight:bold;transform:scaleX(0.9025);transform-origin:left center;">Issue Key</div>
<div class="t" style="left:111.20px;top:232.00px;font-size:14px;color:#000;font-weight:bold;transform:scaleX(0.9281);transform-origin:left center;">Issue Type</div>
<div class="t" style="left:183.20px;top:232.00px;font-size:14px;color:#000;font-weight:bold;transform:scaleX(0.9701);transform-origin:left center;">Summary</div>
<div class="t" style="left:376.20px;top:232.00px;font-size:14px;color:#000;font-weight:bold;transform:scaleX(0.9109);transform-origin:left center;">Assignee</div>
<div class="t" style="left:448.20px;top:232.00px;font-size:14px;color:#000;font-weight:bold;transform:scaleX(0.9735);transform-origin:left center;">Reporter</div>
<div class="t" style="left:520.20px;top:232.00px;font-size:14px;color:#000;font-weight:bold;transform:scaleX(0.9671);transform-origin:left center;">Priority</div>
<div class="t" style="left:592.20px;top:232.00px;font-size:14px;color:#000;font-weight:bold;transform:scaleX(0.9232);transform-origin:left center;">Status</div>
<div class="t" style="left:672.20px;top:232.00px;font-size:14px;color:#000;font-weight:bold;transform:scaleX(0.9346);transform-origin:left center;">Resolution</div>
<div class="t" style="left:744.20px;top:232.00px;font-size:14px;color:#000;font-weight:bold;transform:scaleX(0.9706);transform-origin:left center;">Created</div>
<div class="t" style="left:861.20px;top:232.00px;font-size:14px;color:#000;font-weight:bold;">Updated</div>
<div class="t" style="left:986.20px;top:232.00px;font-size:14px;color:#000;font-weight:bold;transform:scaleX(0.9810);transform-origin:left center;">Due date</div>
<div class="t" style="left:39.20px;top:253.00px;font-size:14px;color:#0000ff;transform:scaleX(0.8685);transform-origin:left center;text-decoration:underline;text-underline-offset:2px;text-decoration-thickness:1px;-webkit-text-stroke:0.2px #0000ff;">PROJ-46</div>
<div class="t" style="left:111.20px;top:253.00px;font-size:14px;color:#000;transform:scaleX(0.9069);transform-origin:left center;-webkit-text-stroke:0.2px #000;">Epic</div>
<div class="t" style="left:183.20px;top:253.00px;font-size:14px;color:#000;transform:scaleX(0.9259);transform-origin:left center;-webkit-text-stroke:0.2px #000;">TEST new add</div>
<div class="t" style="left:448.20px;top:253.00px;font-size:14px;color:#000;transform:scaleX(0.9043);transform-origin:left center;-webkit-text-stroke:0.2px #000;">Ray Rarey</div>
<div class="t" style="left:520.20px;top:253.00px;font-size:14px;color:#000;transform:scaleX(1.0343);transform-origin:left center;-webkit-text-stroke:0.2px #000;">Medium</div>
<div class="t" style="left:592.20px;top:253.00px;font-size:14px;color:#000;transform:scaleX(0.9570);transform-origin:left center;-webkit-text-stroke:0.2px #000;">To Do</div>
<div class="t" style="left:754.19px;top:253.00px;font-size:14px;color:#000;transform:scaleX(1.0300);transform-origin:right center;-webkit-text-stroke:0.2px #000;">3/16/2019 13:50</div>
<div class="t" style="left:879.19px;top:253.00px;font-size:14px;color:#000;transform:scaleX(1.0300);transform-origin:right center;-webkit-text-stroke:0.2px #000;">3/16/2019 13:50</div>
<div class="t" style="left:39.20px;top:274.00px;font-size:14px;color:#0000ff;transform:scaleX(0.8854);transform-origin:left center;text-decoration:underline;text-underline-offset:2px;text-decoration-thickness:1px;-webkit-text-stroke:0.2px #0000ff;">TEST-5066</div>
<div class="t" style="left:111.20px;top:274.00px;font-size:14px;color:#000;transform:scaleX(0.9069);transform-origin:left center;-webkit-text-stroke:0.2px #000;">Epic</div>
<div class="t" style="left:183.20px;top:274.00px;font-size:14px;color:#000;transform:scaleX(0.9895);transform-origin:left center;-webkit-text-stroke:0.2px #000;">A new epic</div>
<div class="t" style="left:448.20px;top:274.00px;font-size:14px;color:#000;transform:scaleX(0.9043);transform-origin:left center;-webkit-text-stroke:0.2px #000;">Ray Rarey</div>
<div class="t" style="left:520.20px;top:274.00px;font-size:14px;color:#000;transform:scaleX(1.0343);transform-origin:left center;-webkit-text-stroke:0.2px #000;">Medium</div>
<div class="t" style="left:592.20px;top:274.00px;font-size:14px;color:#000;transform:scaleX(0.9570);transform-origin:left center;-webkit-text-stroke:0.2px #000;">To Do</div>
<div class="t" style="left:754.19px;top:274.00px;font-size:14px;color:#000;transform:scaleX(1.0300);transform-origin:right center;-webkit-text-stroke:0.2px #000;">8/18/2018 13:59</div>
<div class="t" style="left:879.19px;top:274.00px;font-size:14px;color:#000;transform:scaleX(1.0300);transform-origin:right center;-webkit-text-stroke:0.2px #000;">2/14/2019 17:06</div>
<div class="t" style="left:39.20px;top:295.00px;font-size:14px;color:#0000ff;transform:scaleX(0.8854);transform-origin:left center;text-decoration:underline;text-underline-offset:2px;text-decoration-thickness:1px;-webkit-text-stroke:0.2px #0000ff;">TEST-5036</div>
<div class="t" style="left:111.20px;top:295.00px;font-size:14px;color:#000;transform:scaleX(0.9069);transform-origin:left center;-webkit-text-stroke:0.2px #000;">Epic</div>
<div class="t" style="left:183.20px;top:295.00px;font-size:14px;color:#000;transform:scaleX(0.9815);transform-origin:left center;-webkit-text-stroke:0.2px #000;">Completed Epic</div>
<div class="t" style="left:448.20px;top:295.00px;font-size:14px;color:#000;transform:scaleX(0.9043);transform-origin:left center;-webkit-text-stroke:0.2px #000;">Ray Rarey</div>
<div class="t" style="left:520.20px;top:295.00px;font-size:14px;color:#000;transform:scaleX(1.0343);transform-origin:left center;-webkit-text-stroke:0.2px #000;">Medium</div>
<div class="t" style="left:592.20px;top:295.00px;font-size:14px;color:#000;transform:scaleX(0.9570);transform-origin:left center;-webkit-text-stroke:0.2px #000;">To Do</div>
<div class="t" style="left:754.19px;top:295.00px;font-size:14px;color:#000;transform:scaleX(1.0300);transform-origin:right center;-webkit-text-stroke:0.2px #000;">7/25/2017 15:13</div>
<div class="t" style="left:872.45px;top:295.00px;font-size:14px;color:#000;transform:scaleX(1.0300);transform-origin:right center;-webkit-text-stroke:0.2px #000;">11/14/2018 20:06</div>
<div class="t" style="left:39.20px;top:316.00px;font-size:14px;color:#0000ff;transform:scaleX(0.8719);transform-origin:left center;text-decoration:underline;text-underline-offset:2px;text-decoration-thickness:1px;-webkit-text-stroke:0.2px #0000ff;">PROJ-17</div>
<div class="t" style="left:111.20px;top:316.00px;font-size:14px;color:#000;transform:scaleX(0.9069);transform-origin:left center;-webkit-text-stroke:0.2px #000;">Epic</div>
<div class="t" style="left:183.20px;top:316.00px;font-size:14px;color:#000;transform:scaleX(0.8666);transform-origin:left center;-webkit-text-stroke:0.2px #000;">HAFE LABEL</div>
<div class="t" style="left:448.20px;top:316.00px;font-size:14px;color:#000;transform:scaleX(0.9043);transform-origin:left center;-webkit-text-stroke:0.2px #000;">Ray Rarey</div>
<div class="t" style="left:520.20px;top:316.00px;font-size:14px;color:#000;transform:scaleX(1.0343);transform-origin:left center;-webkit-text-stroke:0.2px #000;">Medium</div>
<div class="t" style="left:592.20px;top:316.00px;font-size:14px;color:#000;transform:scaleX(0.9570);transform-origin:left center;-webkit-text-stroke:0.2px #000;">To Do</div>
<div class="t" style="left:754.19px;top:316.00px;font-size:14px;color:#000;transform:scaleX(1.0300);transform-origin:right center;-webkit-text-stroke:0.2px #000;">7/24/2017 20:39</div>
<div class="t" style="left:879.19px;top:316.00px;font-size:14px;color:#000;transform:scaleX(1.0300);transform-origin:right center;-webkit-text-stroke:0.2px #000;">8/18/2018 20:02</div>
<div class="t" style="left:39.20px;top:337.00px;font-size:14px;color:#0000ff;transform:scaleX(0.8719);transform-origin:left center;text-decoration:underline;text-underline-offset:2px;text-decoration-thickness:1px;-webkit-text-stroke:0.2px #0000ff;">PROJ-16</div>
<div class="t" style="left:111.20px;top:337.00px;font-size:14px;color:#000;transform:scaleX(0.9069);transform-origin:left center;-webkit-text-stroke:0.2px #000;">Epic</div>
<div class="t" style="left:183.20px;top:337.00px;font-size:14px;color:#000;transform:scaleX(0.9760);transform-origin:left center;-webkit-text-stroke:0.2px #000;">Something that makes sense.</div>
<div class="t" style="left:448.20px;top:337.00px;font-size:14px;color:#000;transform:scaleX(0.9043);transform-origin:left center;-webkit-text-stroke:0.2px #000;">Ray Rarey</div>
<div class="t" style="left:520.20px;top:337.00px;font-size:14px;color:#000;transform:scaleX(0.9649);transform-origin:left center;-webkit-text-stroke:0.2px #000;">Lowest</div>
<div class="t" style="left:592.20px;top:337.00px;font-size:14px;color:#000;transform:scaleX(0.9570);transform-origin:left center;-webkit-text-stroke:0.2px #000;">To Do</div>
<div class="t" style="left:754.19px;top:337.00px;font-size:14px;color:#000;transform:scaleX(1.0300);transform-origin:right center;-webkit-text-stroke:0.2px #000;">7/24/2017 20:37</div>
<div class="t" style="left:872.45px;top:337.00px;font-size:14px;color:#000;transform:scaleX(1.0300);transform-origin:right center;-webkit-text-stroke:0.2px #000;">11/14/2018 20:01</div>
<div class="t" style="left:39.20px;top:358.00px;font-size:14px;color:#0000ff;transform:scaleX(0.8394);transform-origin:left center;text-decoration:underline;text-underline-offset:2px;text-decoration-thickness:1px;-webkit-text-stroke:0.2px #0000ff;">SSP-24</div>
<div class="t" style="left:111.20px;top:358.00px;font-size:14px;color:#000;transform:scaleX(0.9069);transform-origin:left center;-webkit-text-stroke:0.2px #000;">Epic</div>
<div class="t" style="left:183.20px;top:358.00px;font-size:14px;color:#000;transform:scaleX(0.9725);transform-origin:left center;-webkit-text-stroke:0.2px #000;">Google app</div>
<div class="t" style="left:448.20px;top:358.00px;font-size:14px;color:#000;transform:scaleX(0.9043);transform-origin:left center;-webkit-text-stroke:0.2px #000;">Ray Rarey</div>
<div class="t" style="left:520.20px;top:358.00px;font-size:14px;color:#000;transform:scaleX(0.9898);transform-origin:left center;-webkit-text-stroke:0.2px #000;">High</div>
<div class="t" style="left:592.20px;top:358.00px;font-size:14px;color:#000;transform:scaleX(0.9499);transform-origin:left center;-webkit-text-stroke:0.2px #000;">In Progress</div>
<div class="t" style="left:754.19px;top:358.00px;font-size:14px;color:#000;transform:scaleX(1.0300);transform-origin:right center;-webkit-text-stroke:0.2px #000;">7/24/2017 20:21</div>
<div class="t" style="left:879.19px;top:358.00px;font-size:14px;color:#000;transform:scaleX(1.0300);transform-origin:right center;-webkit-text-stroke:0.2px #000;">12/2/2018 16:14</div>
<div style="left:0px;top:856px;width:37px;height:16px;background:#edebe9;"></div>
<div style="left:37px;top:856px;width:1310px;height:16px;background-image:repeating-conic-gradient(#d4d0c8 0% 25%, #ffffff 0% 50%);background-size:2px 2px;"></div>
<div style="left:37px;top:856px;width:16px;height:16px;background:#d4d0c8;border-top:1px solid #d4d0c8;border-left:1px solid #d4d0c8;box-shadow:inset 1px 1px 0 #fff, inset -1px -1px 0 #808080;border-right:1px solid #404040;border-bottom:1px solid #404040;box-sizing:border-box;"></div>
<svg style="left:41px;top:859px" width="6" height="9" viewBox="0 0 6 9"><path d="M5 0.8 L0.8 4.5 L5 8.2 Z" fill="#000"/></svg>
<div style="left:53px;top:856px;width:509px;height:16px;background:#d4d0c8;border-top:1px solid #d4d0c8;border-left:1px solid #d4d0c8;box-shadow:inset 1px 1px 0 #fff, inset -1px -1px 0 #808080;border-right:1px solid #404040;border-bottom:1px solid #404040;box-sizing:border-box;"></div>
<div style="left:0px;top:872px;width:1347px;height:25px;background:#f3f2f1;"></div>
<svg style="left:9px;top:880px" width="8" height="9" viewBox="0 0 8 9"><path d="M1.5 0.5 V8.5" stroke="#c8c6c4" stroke-width="1"/><path d="M7 0.5 L2.5 4.5 L7 8.5 Z" fill="#c8c6c4"/></svg>
<svg style="left:37px;top:880px" width="6" height="9" viewBox="0 0 6 9"><path d="M5 0.5 L0.5 4.5 L5 8.5 Z" fill="#c8c6c4"/></svg>
<svg style="left:64px;top:880px" width="6" height="9" viewBox="0 0 6 9"><path d="M1 0.5 L5.5 4.5 L1 8.5 Z" fill="#c8c6c4"/></svg>
<svg style="left:90px;top:880px" width="8" height="9" viewBox="0 0 8 9"><path d="M1 0.5 L5.5 4.5 L1 8.5 Z" fill="#c8c6c4"/><path d="M6.5 0.5 V8.5" stroke="#c8c6c4" stroke-width="1"/></svg>
<div style="left:136px;top:874px;width:71px;height:22px;background:#fff;border-left:1px solid #a19f9d;border-right:1px solid #a19f9d;box-sizing:border-box;"></div>
<div style="left:136px;top:894px;width:71px;height:2px;background:#217346;"></div>
<div class="t" style="left:158.00px;top:877.00px;font-size:13px;color:#217346;font-weight:bold;transform:scaleX(0.9795);transform-origin:left center;">Data</div>
<svg style="left:246px;top:877px" width="16" height="16" viewBox="0 0 16 16"><circle cx="8" cy="8" r="7.2" fill="none" stroke="#605e5c" stroke-width="1.1"/><path d="M8 4 V12 M4 8 H12" stroke="#605e5c" stroke-width="1.6"/></svg>
</body></html>
